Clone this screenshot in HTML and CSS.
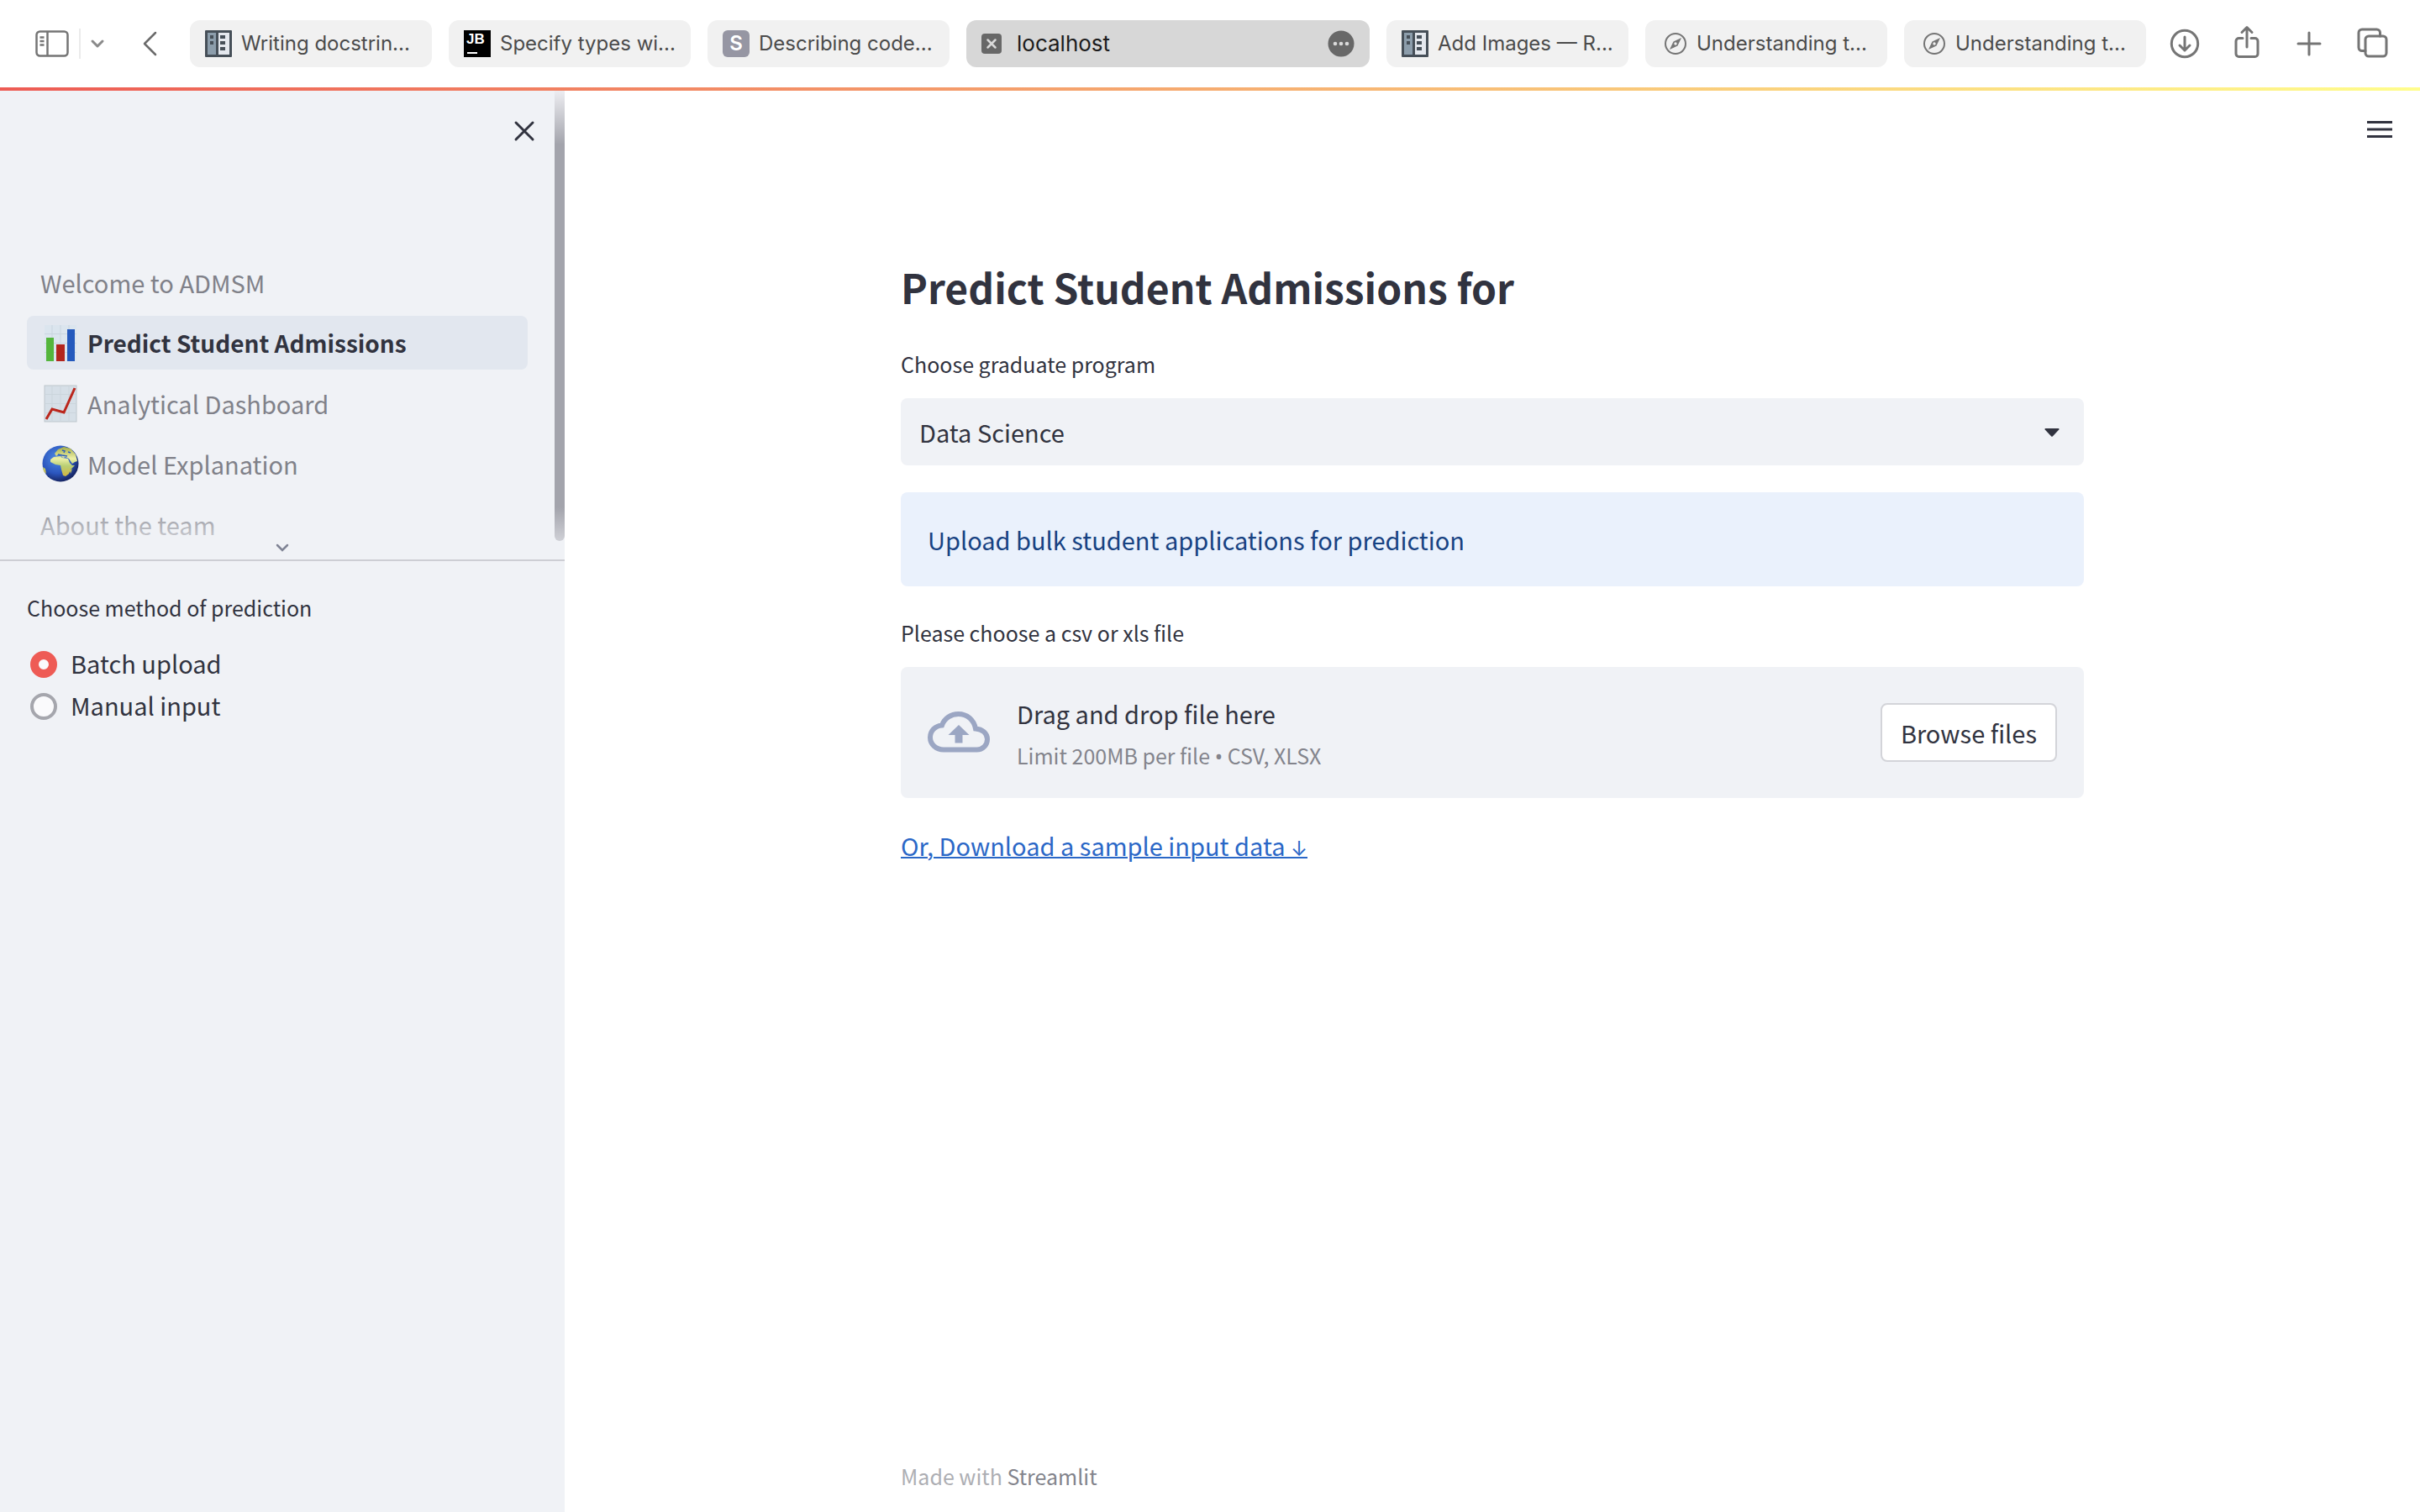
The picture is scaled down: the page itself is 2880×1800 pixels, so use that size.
FILE: index.html
```html
<!DOCTYPE html>
<html lang="en">
<head>
<meta charset="utf-8">
<title>Predict Student Admissions</title>
<link rel="stylesheet" href="styles.css">
</head>
<body>
<svg class="defs" width="0" height="0" aria-hidden="true">
  <symbol id="book" viewBox="0 0 32 32">
    <rect width="32" height="32" rx="1" fill="#464f58"/>
    <path d="M3 3h10v26H3z" fill="#8c9dab"/>
    <path d="M16 3h13v26H16z" fill="#e4e8ee"/>
    <path d="M6 6h4v4H6zM6 13h4v4H6zM18 6h6v4h-6zM18 13h6v4h-6zM18 20h6v4h-6z" fill="#464f58"/>
  </symbol>
  <symbol id="compass" viewBox="0 0 28 28">
    <circle cx="14" cy="14" r="12" fill="none" stroke="#757575" stroke-width="2"/>
    <path fill-rule="evenodd" d="M21 7l-4.500 9.500L7 21l4.500-9.500zM14 12.300a1.700 1.700 0 1 0 0 3.400 1.700 1.700 0 0 0 0-3.400z" fill="#757575"/>
  </symbol>
</svg>

<header class="toolbar">
  <div class="toolbar-left">
    <button class="tool" aria-label="Toggle sidebar">
      <svg width="40" height="32" viewBox="0 0 40 32" fill="none" stroke="#757575" stroke-width="2.500"><rect x="1.500" y="1.500" width="37" height="29" rx="4"/><path d="M14.500 2v28M5.500 8.500h5M5.500 13h5M5.500 17.500h5"/></svg>
    </button>
    <span class="divider"></span>
    <button class="tool" aria-label="Tab groups">
      <svg width="16" height="10" viewBox="0 0 16 10" fill="none" stroke="#8a8a8a" stroke-width="3" stroke-linecap="round" stroke-linejoin="round"><path d="M2 2l6 6 6-6"/></svg>
    </button>
    <button class="tool back" aria-label="Back">
      <svg width="18" height="30" viewBox="0 0 18 30" fill="none" stroke="#6b6b6b" stroke-width="2.500" stroke-linecap="round" stroke-linejoin="round"><path d="M15 2L2 15l13 13"/></svg>
    </button>
  </div>
  <nav class="tabs" aria-label="Tabs">
    <a class="tab" href="#"><svg class="favicon"><use href="#book"/></svg><span>Writing docstrin...</span></a>
    <a class="tab" href="#"><svg class="favicon" viewBox="0 0 32 32"><rect width="32" height="32"/><text x="3" y="16" class="jb">JB</text><path d="M4 26h12v2H4z" fill="#fff"/></svg><span>Specify types wi...</span></a>
    <a class="tab" href="#"><span class="letter">S</span><span>Describing code...</span></a>
    <a class="tab tab-active" href="#" aria-current="page">
      <svg width="24" height="24" viewBox="0 0 24 24"><rect width="24" height="24" rx="4" fill="#686868"/><path d="M7.500 7.500l9 9M16.500 7.500l-9 9" stroke="#dadada" stroke-width="2.500" stroke-linecap="round"/></svg>
      <span class="tab-title">localhost</span>
      <svg width="32" height="32" viewBox="0 0 32 32"><circle cx="16" cy="16" r="15.500" fill="#686868"/><g fill="#dadada"><circle cx="9" cy="16" r="2.300"/><circle cx="16" cy="16" r="2.300"/><circle cx="23" cy="16" r="2.300"/></g></svg>
    </a>
    <a class="tab" href="#"><svg class="favicon"><use href="#book"/></svg><span>Add Images — R...</span></a>
    <a class="tab" href="#"><svg class="compass"><use href="#compass"/></svg><span>Understanding t...</span></a>
    <a class="tab" href="#"><svg class="compass"><use href="#compass"/></svg><span>Understanding t...</span></a>
  </nav>
  <div class="toolbar-right">
    <button class="tool" aria-label="Downloads"><svg class="tool-icon" viewBox="0 0 36 36"><circle cx="18" cy="18" r="15.700"/><path d="M18 10v16M12 20l6 6 6-6"/></svg></button>
    <button class="tool" aria-label="Share"><svg class="tool-icon" viewBox="0 0 36 36"><path d="M13 11.500H8.500a3.500 3.500 0 0 0-3.500 3.500v15a3.500 3.500 0 0 0 3.500 3.500h19a3.500 3.500 0 0 0 3.500-3.500V15a3.500 3.500 0 0 0-3.500-3.500H23M18 22V-1M12 4.500L18-1.500l6 6"/></svg></button>
    <button class="tool" aria-label="New tab"><svg class="tool-icon" viewBox="0 0 36 36"><path d="M18 5v26M5 18h26"/></svg></button>
    <button class="tool" aria-label="Tab overview"><svg class="tool-icon" viewBox="0 0 36 36"><rect x="11" y="9" width="25" height="24" rx="4"/><path d="M11 26.500H7A4 4 0 0 1 3 22.500V5a4 4 0 0 1 4-4h17.500a4 4 0 0 1 4 4v4"/></svg></button>
  </div>
</header>
<div class="decoration"></div>

<div class="app">
  <aside class="sidebar">
    <div class="nav-area">
      <button class="close" aria-label="Close sidebar"><svg width="24" height="24" viewBox="0 0 24 24" stroke="#31333f" stroke-width="3" stroke-linecap="round"><path d="M2 2l20 20M22 2L2 22"/></svg></button>
      <ul class="nav">
        <li><a href="#">Welcome to ADMSM</a></li>
        <li><a class="current" href="#">
          <svg class="emoji" viewBox="0 0 44 44"><rect x="3" y="1" width="38" height="43" fill="#dbe5ee"/><path d="M3 11.500h38M3 22.500h38M3 33.500h38M12 1v43M22 1v43M32 1v43" stroke="#c9d5df"/><path d="M5 16h9v28H5z" fill="#54b53c"/><path d="M17 24h10v20H17z" fill="#b3251d"/><path d="M30 6h9v38h-9z" fill="#2459bd"/></svg>
          Predict Student Admissions</a></li>
        <li><a href="#">
          <svg class="emoji" viewBox="0 0 44 44"><rect x="3" y="1" width="38" height="43" fill="#d6dfe7" stroke="#bdc6cc"/><path d="M3 11.500h38M3 22.500h38M3 33.500h38M12 1v43M22 1v43M32 1v43" stroke="#cbd5dc"/><path d="M5 41l7-12 14 4L39 4" fill="none" stroke="#bb261c" stroke-width="3"/></svg>
          Analytical Dashboard</a></li>
        <li><a href="#">
          <svg class="emoji" viewBox="0 0 44 44"><defs><radialGradient id="sea" cx=".4" cy=".35" r=".65"><stop offset="0" stop-color="#4d8be6"/><stop offset=".65" stop-color="#2b55bd"/><stop offset="1" stop-color="#172766"/></radialGradient><linearGradient id="land" x1="0" y1="0" x2="0" y2="1"><stop offset="0" stop-color="#a5ad47"/><stop offset=".4" stop-color="#edf0a8"/><stop offset=".65" stop-color="#b9ce73"/><stop offset="1" stop-color="#d2b642"/></linearGradient></defs><circle cx="22" cy="22" r="21.500" fill="url(#sea)"/><path d="M10 17l4-3 8-1 2 2 7 1 2 5 3 3h3l-5 5-2 5-4 3-3-1-2-7-1-5-6-1-6-3zM15 10l4-5 7-3 8 2 6 7 2 8-3 1-3 2-4-6-4-2-3 1-3-3-3-1-2 2zM1 26l3 2 1 6-3-3zM33 30l3-2-2 6z" fill="url(#land)"/><path d="M24 6l3 1-1 2M19 11l5 1 6 1M31 8l3 1" fill="none" stroke="#2f60ba" stroke-width="1.500"/></svg>
          Model Explanation</a></li>
        <li><a href="#">About the team</a></li>
      </ul>
      <div class="nav-fade"><svg width="16" height="10" viewBox="0 0 16 10" fill="none" stroke="#808495" stroke-width="2.500" stroke-linecap="round"><path d="M2 2l6 6 6-6"/></svg></div>
      <div class="scrollbar"></div>
    </div>
    <fieldset class="method">
      <legend class="label">Choose method of prediction</legend>
      <label class="option"><input type="radio" name="method" checked>Batch upload</label>
      <label class="option"><input type="radio" name="method">Manual input</label>
    </fieldset>
  </aside>

  <main class="main">
    <button class="menu" aria-label="Main menu"><svg width="30" height="20" viewBox="0 0 30 20" fill="#31333f"><path d="M0 0h30v3H0zM0 8.500h30v3H0zM0 17h30v3H0z"/></svg></button>
    <div class="content">
      <h1>Predict Student Admissions for</h1>
      <div class="field">
        <label class="label" for="program">Choose graduate program</label>
        <div class="select">
          <select id="program"><option>Data Science</option></select>
          <svg width="18" height="10" viewBox="0 0 18 10"><path d="M1 0h16q1 .500.300 1.500L10 9.200q-1 1-2 0L.700 1.500Q0 .500 1 0z" fill="#31333f"/></svg>
        </div>
      </div>
      <div class="info">Upload bulk student applications for prediction</div>
      <div class="field">
        <span class="label" id="upload-label">Please choose a csv or xls file</span>
        <section class="dropzone" aria-labelledby="upload-label">
          <svg width="74" height="50" viewBox="0 0 74 50"><path d="M19 45.500C10 45.500 3 39 3 31s6-14 14-14.600C20 8 28 3 36.500 3 47 3 55 10 57 20.500 65 21 71 26 71 33c0 7-5.500 12.500-12.500 12.500z" fill="none" stroke="#9ba6c3" stroke-width="6"/><path d="M37 16l12.500 12H41.500v9.500h-9V28H24.500z" fill="#9ba6c3"/></svg>
          <div class="drop-text">
            <span>Drag and drop file here</span>
            <small>Limit 200MB per file <span class="bullet">•</span> CSV, XLSX</small>
          </div>
          <button class="browse">Browse files</button>
        </section>
      </div>
      <p class="download"><a href="#">Or, Download a sample input data <span class="arrow">↓</span></a></p>
      <footer>Made with <a href="#">Streamlit</a></footer>
    </div>
  </main>
</div>
</body>
</html>
```
FILE: styles.css
```css
* { box-sizing: border-box; }

body {
  margin: 0;
  min-height: 100vh;
  display: flex;
  flex-direction: column;
  background: #fff;
  color: #31333f;
  font-family: "Noto Sans CJK SC", "Noto Sans", sans-serif;
  font-size: 29px;
  line-height: 48px;
}

a { color: inherit; text-decoration: none; }
button, select { font: inherit; color: inherit; }
svg { display: block; flex: none; overflow: visible; }
.defs { position: absolute; }

/* Browser toolbar */
.toolbar {
  height: 104px;
  display: flex;
  align-items: center;
  padding: 0 40px 0 42px;
  font-family: Inter, "Liberation Sans", sans-serif;
  font-size: 24px;
}
.toolbar-left { display: flex; align-items: center; gap: 12px; width: 184px; }
.toolbar-right { display: flex; align-items: center; gap: 38px; padding-left: 28px; }
.tool { padding: 0; border: 0; background: none; }
.tool-icon {
  width: 36px;
  height: 36px;
  fill: none;
  stroke: #757575;
  stroke-width: 3;
  stroke-linecap: round;
  stroke-linejoin: round;
}
.divider { width: 2px; height: 36px; background: #ebebeb; }
.back { margin-left: 34px; }

.tabs {
  flex: 1;
  display: grid;
  grid-template-columns: repeat(3, 3fr) 5fr repeat(3, 3fr);
  gap: 20px;
  min-width: 0;
}
.tab {
  min-width: 0;
  height: 56px;
  display: flex;
  align-items: center;
  gap: 11px;
  padding: 0 18px;
  border-radius: 12px;
  background: #f1f1f1;
  color: #4b4b4b;
  white-space: nowrap;
}
.tab-active { gap: 18px; background: #d7d7d7; color: #1c1c1c; font-size: 26px; }
.tab-title { flex: 1; }
.favicon { width: 32px; height: 32px; }
.compass { width: 28px; height: 28px; margin-left: 4px; }
.jb { font: bold 17px "Liberation Sans", sans-serif; fill: #fff; }
.letter {
  width: 32px;
  height: 32px;
  border-radius: 6px;
  background: #9696a3;
  color: #fff;
  font-weight: 600;
  line-height: 32px;
  text-align: center;
}

.decoration { height: 4px; background: linear-gradient(90deg, #ed5b54, #fffd8c); }

/* Sidebar */
.app { flex: 1; display: flex; }
.sidebar { width: 672px; flex: none; background: #f0f2f6; }
.nav-area {
  position: relative;
  padding: 36px 44px 10px 32px;
  border-bottom: 2px solid #cdced4;
}
.close { display: block; margin: 0 -8px 0 auto; padding: 0; border: 0; background: none; }
.nav {
  margin: 136px 0 0;
  padding: 0;
  list-style: none;
  display: flex;
  flex-direction: column;
  gap: 8px;
  color: #808189;
}
.nav a {
  display: flex;
  align-items: center;
  gap: 10px;
  height: 64px;
  padding: 0 16px;
  border-radius: 8px;
}
.nav .current { background: #e2e7ef; color: #31333f; font-size: 28px; font-weight: 700; }
.emoji { width: 44px; height: 44px; margin-left: 2px; }
.nav-fade {
  position: absolute;
  inset: auto 0 0 0;
  height: 72px;
  display: flex;
  align-items: flex-end;
  justify-content: center;
  padding-bottom: 9px;
  background: linear-gradient(#f0f2f600, #f0f2f6);
}
.scrollbar {
  position: absolute;
  top: 0;
  right: 0;
  bottom: 22px;
  width: 12px;
  border-radius: 0 0 6px 6px;
  background: linear-gradient(#ededf1, #a3a4ac 64px, #a3a4ac calc(100% - 40px), #cfd0d6);
}

.label { display: block; padding: 0; font-size: 25px; line-height: 46px; }
.method { margin: 0; padding: 32px; border: 0; }
.method .label { float: left; width: 100%; margin-bottom: 18px; }
.option { clear: both; display: flex; align-items: center; gap: 16px; height: 50px; }
.option input {
  appearance: none;
  width: 32px;
  height: 32px;
  margin: 4px 0 0 4px;
  border: 4px solid #a5a6ad;
  border-radius: 50%;
  background: #fafafc;
}
.option input:checked { border: 10px solid #ee5b55; }

/* Main column */
.main { position: relative; flex: 1; display: flex; justify-content: center; padding: 0 32px; }
.menu { position: absolute; top: 36px; right: 33px; padding: 0; border: 0; background: none; }
.content {
  width: 100%;
  max-width: 1408px;
  display: flex;
  flex-direction: column;
  gap: 32px;
  padding: 196px 0 20px;
}
h1 { margin: 0; font-size: 48px; line-height: 74px; font-weight: 700; }
.field { display: flex; flex-direction: column; gap: 18px; }
.select { position: relative; }
.select select {
  appearance: none;
  display: block;
  width: 100%;
  height: 80px;
  padding: 0 22px;
  border: 0;
  border-radius: 8px;
  background: #f0f2f6;
}
.select svg { position: absolute; right: 29px; top: 36px; pointer-events: none; }
.info { padding: 32px; border-radius: 8px; background: #eaf1fc; color: #174282; }
.dropzone {
  display: flex;
  align-items: center;
  gap: 32px;
  min-height: 156px;
  padding: 0 32px;
  border-radius: 8px;
  background: #f0f2f6;
}
.drop-text { flex: 1; display: flex; flex-direction: column; padding-top: 6px; }
.drop-text small { color: #83848c; font-size: 25px; line-height: 52px; }
.bullet { font-family: "Noto Sans", sans-serif; }
.browse {
  height: 70px;
  padding: 0 22px;
  border: 2px solid #d3d4d9;
  border-radius: 8px;
  background: #fff;
}
.download { margin: 0; }
.download a { color: #2a67c7; text-decoration: underline; text-decoration-thickness: 2px; }
.arrow { font-family: Inter, sans-serif; font-size: 24px; }
footer { margin-top: auto; color: #adaeb3; font-size: 25px; line-height: 46px; }
footer a { color: #83848c; }
```
